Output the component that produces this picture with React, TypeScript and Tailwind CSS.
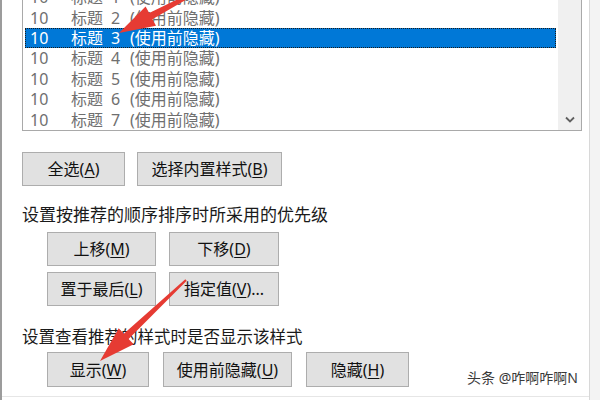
import React from 'react';

type BtnProps = { text: string; mn: string; tail?: string; className: string };

const Btn: React.FC<BtnProps> = ({ text, mn, tail = '', className }) => (
  <button
    className={`h-[34px] bg-[#e1e1e1] border border-[#adadad] text-[16px] text-[#111] flex items-center justify-center ${className}`}
  >
    <span>
      {text}(<span className="underline underline-offset-2">{mn}</span>){tail}
    </span>
  </button>
);

const rows = [1, 2, 3, 4, 5, 6, 7];

const App: React.FC = () => {
  return (
    <div className="relative w-[600px] h-[400px] overflow-hidden bg-white flex font-['Noto_Sans','Noto_Sans_CJK_SC',sans-serif]">
      <div className="w-[2px] bg-[#9c9c9c]" />
      <div className="flex-1 flex flex-col pl-[20px] pr-[7px] border-b border-[#e6e6e6] h-[397px]">
        {/* style list */}
        <div className="-mt-[16px] h-[147px] border border-[#a9a9a9] flex">
          <div className="flex-1 pl-[2px] pt-[2px] pr-[2px]">
            {rows.map((n) => {
              const sel = n === 3;
              return (
                <div
                  key={n}
                  className={`h-[20.4px] flex items-center pl-[5px] text-[16px] leading-none ${
                    sel ? 'bg-[#0078d7] text-white outline outline-1 outline-dotted outline-[#1b1b1b] -outline-offset-1' : 'text-[#6f6f6f]'
                  }`}
                >
                  <span className="w-[41px]">10</span>
                  <span className="w-[59px] flex">
                    标题<span className="ml-[8px]">{n}</span>
                  </span>
                  <span>(使用前隐藏)</span>
                </div>
              );
            })}
          </div>
          <div className="w-[23px] bg-[#f0f0f0] flex flex-col justify-end items-center pb-[7px]">
            <svg width="10" height="7" viewBox="0 0 10 7">
              <path d="M1 1.5 L5 5.5 L9 1.5" fill="none" stroke="#606060" strokeWidth="1.8" />
            </svg>
          </div>
        </div>

        <div className="mt-[21px] flex gap-[12px]">
          <Btn text="全选" mn="A" className="w-[103px]" />
          <Btn text="选择内置样式" mn="B" className="w-[145px]" />
        </div>

        <div className="mt-[17px] h-[24px] leading-[24px] text-[17px] text-[#1a1a1a]">
          设置按推荐的顺序排序时所采用的优先级
        </div>

        <div className="mt-[5px] ml-[25px] flex gap-[13px]">
          <Btn text="上移" mn="M" className="w-[109px]" />
          <Btn text="下移" mn="D" className="w-[110px]" />
        </div>
        <div className="mt-[6px] ml-[25px] flex gap-[13px]">
          <Btn text="置于最后" mn="L" className="w-[109px]" />
          <Btn text="指定值" mn="V" tail="..." className="w-[110px]" />
        </div>

        <div className="mt-[19px] h-[24px] leading-[24px] text-[16.5px] text-[#1a1a1a]">
          设置查看推荐的样式时是否显示该样式
        </div>

        <div className="mt-[3px] ml-[25px] flex gap-[14px]">
          <Btn text="显示" mn="W" className="w-[102px] h-[35px]" />
          <Btn text="使用前隐藏" mn="U" className="w-[129px] h-[35px]" />
          <Btn text="隐藏" mn="H" className="w-[103px] h-[35px]" />
        </div>
      </div>
      <div className="w-[11px] bg-[#f3f3f3] border-l border-[#d8d8d8]" />

      {/* watermark */}
      <div className="absolute left-[467px] top-[368px] text-[14px] leading-[20px] text-[#3a3a3a] whitespace-nowrap">
        头条 @咋啊咋啊N
      </div>

      {/* annotation arrows */}
      <svg className="absolute inset-0 pointer-events-none" width="600" height="400" viewBox="0 0 600 400">
        <polygon
          fill="#e63b33"
          points="200.7,-8.7 152.4,19.2 156,25.8 119,33 145.6,6.4 149.2,13 199.3,-11.3"
        />
        <polygon
          fill="#e63b33"
          points="186.7,280.7 128.6,338.9 133.7,344.3 100,361 118.7,328.3 123.8,333.7 185.3,279.3"
        />
      </svg>
    </div>
  );
};

export default App;
